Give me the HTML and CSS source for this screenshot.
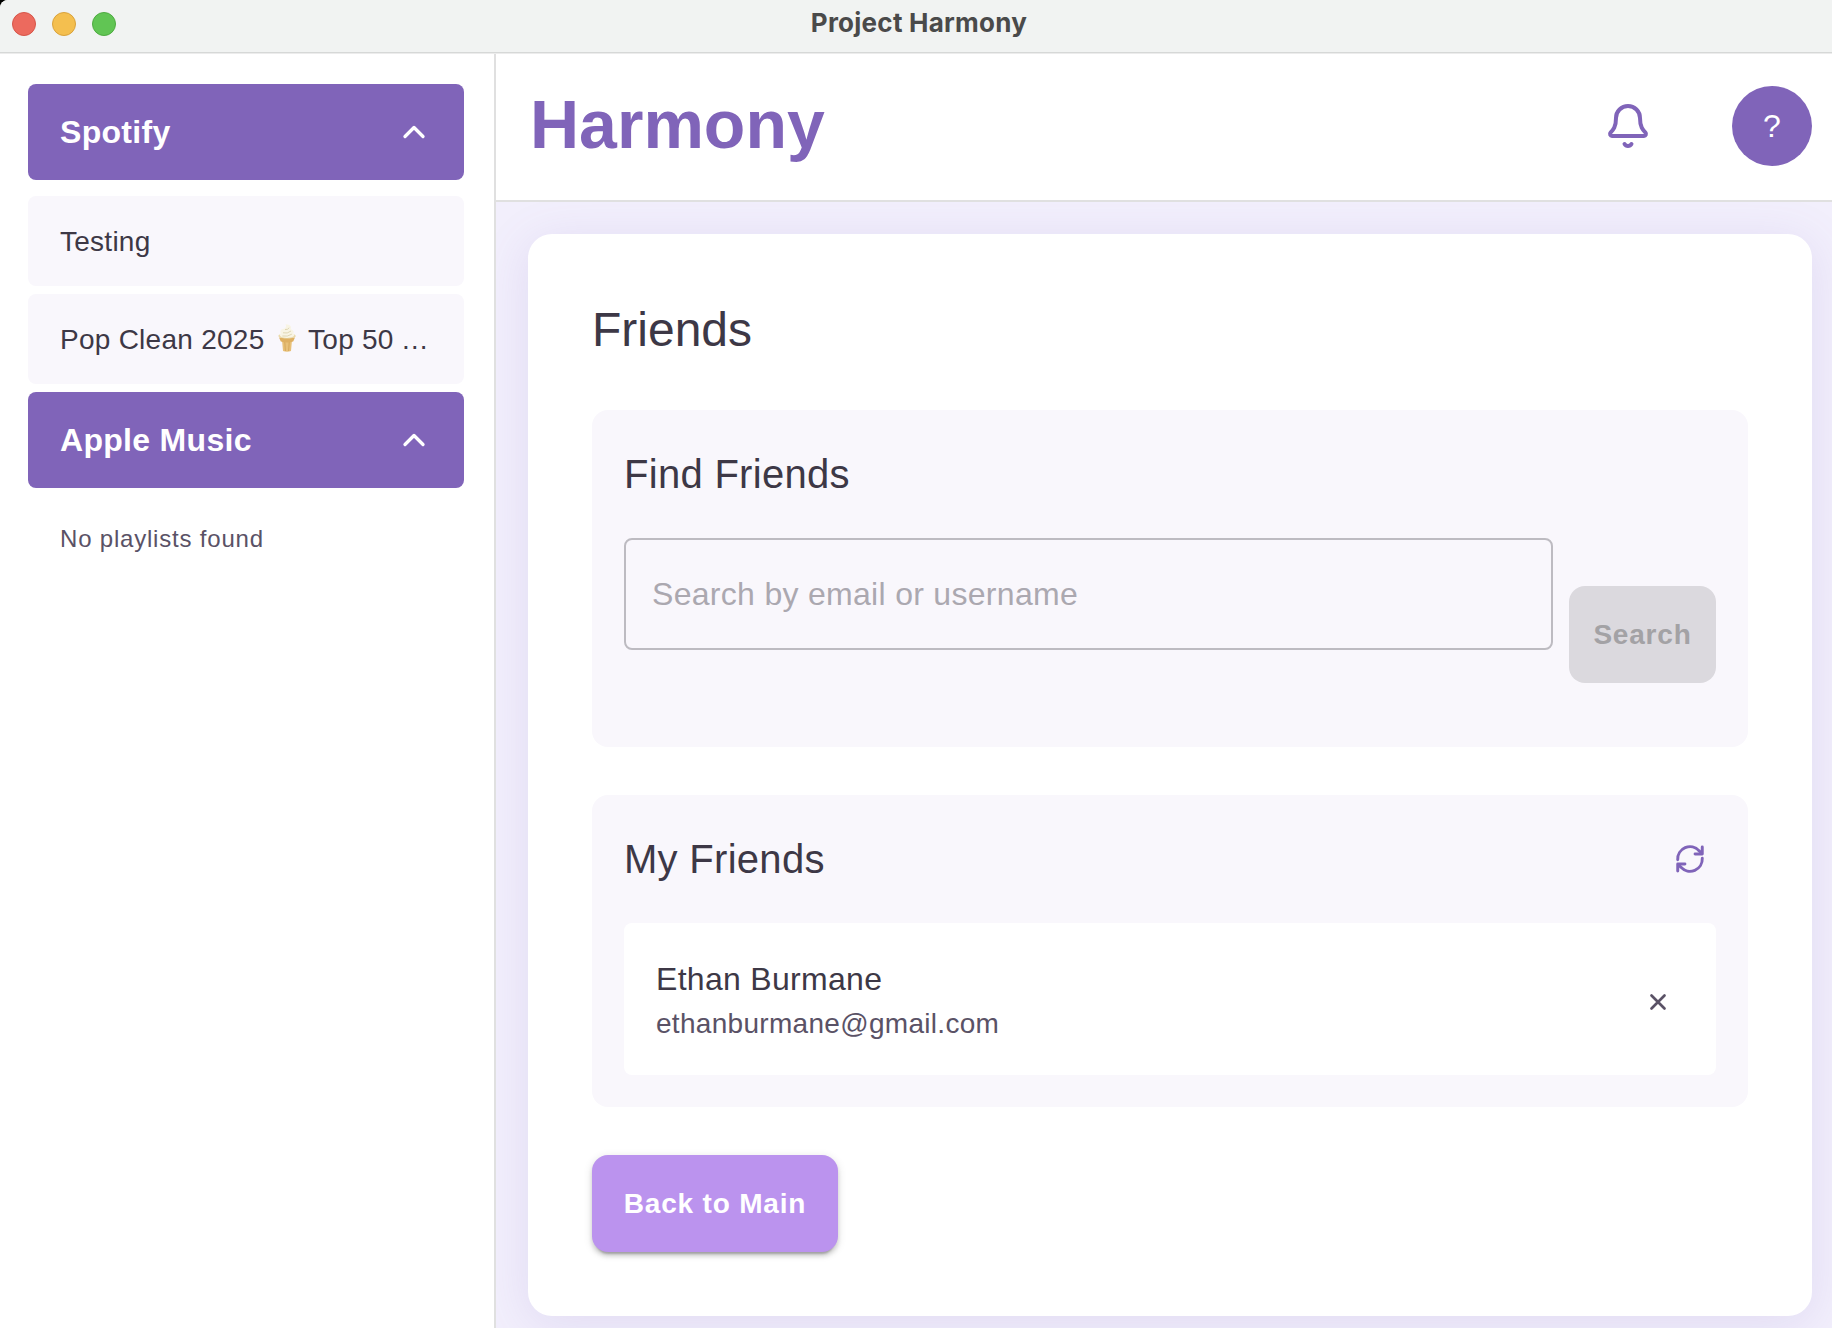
FILE: index.html
```html
<!DOCTYPE html>
<html lang="en">
<head>
<meta charset="utf-8">
<title>Project Harmony</title>
<link rel="stylesheet" href="styles.css">
</head>
<body>
<div class="window">
  <div class="titlebar">
    <div class="lights"><span class="light red"></span><span class="light yellow"></span><span class="light green"></span></div>
    <div class="window-title">Project Harmony</div>
    <div></div>
  </div>
  <div class="app">
    <aside class="sidebar">
      <button class="group">
        <span>Spotify</span>
        <svg width="36" height="36" viewBox="0 0 24 24" class="line chevron"><path d="m18 15-6-6-6 6"/></svg>
      </button>
      <ul class="playlists">
        <li class="playlist">Testing</li>
        <li class="playlist">Pop Clean 2025 <svg class="cone" viewBox="0 0 20 28" width="20" height="28"><path d="M5 16h10l-1 11q-4 1.500-8 0z" fill="#e8c078"/><path d="M7.800 18l.6 9M12.200 18l-.6 9" stroke="#cf9d4e" stroke-width=".7" fill="none"/><path d="M2 13.500h16l-1.800 4q-6.200 1.800-12.400 0z" fill="#dfb062"/><path d="M1.200 12.200q.2-1.400 2-1.900h13.600q2 .5 2 2.100c-3.500 2.800-13.800 3-17.600-.2z" fill="#ead9a8"/><path d="M8.600.2c4.800.1 6.400 3 4.900 5 3 .5 3.700 2.600 2.800 4.200 1.400.8 1.300 2.400-.1 3.200-3.600 2-9.300 1.900-12.400 0-1.400-1-1.300-2.700 0-3.400-1.200-1.900 0-3.700 2-4.200 2.600-.6 4-2.100 2.800-4.800z" fill="#f8f4e4"/><path d="M6 8.800q4.500 1.200 8-1.800M5.300 12q5.200 1 9.500-1.800M8 5.600q3 .2 4.200-1.800" fill="none" stroke="#ddd3ae" stroke-width=".9"/></svg> Top 50 <span class="more">…</span></li>
      </ul>
      <button class="group">
        <span>Apple Music</span>
        <svg width="36" height="36" viewBox="0 0 24 24" class="line chevron"><path d="m18 15-6-6-6 6"/></svg>
      </button>
      <p class="empty">No playlists found</p>
    </aside>
    <div class="main">
      <header class="header">
        <h1 class="brand">Harmony</h1>
        <div class="actions">
          <svg width="48" height="48" viewBox="0 0 24 24" class="line bell"><path d="M10.268 21a2 2 0 0 0 3.464 0"/><path d="M3.262 15.326A1 1 0 0 0 4 17h16a1 1 0 0 0 .74-1.673C19.41 13.956 18 12.499 18 8A6 6 0 0 0 6 8c0 4.499-1.411 5.956-2.738 7.326"/></svg>
          <div class="avatar">?</div>
        </div>
      </header>
      <main class="content">
        <div class="paper">
          <h2 class="page-title">Friends</h2>
          <section class="panel find">
            <h3 class="panel-title">Find Friends</h3>
            <div class="search-row">
              <input class="search-input" type="text" placeholder="Search by email or username">
              <button class="search-button" disabled>Search</button>
            </div>
          </section>
          <section class="panel">
            <div class="panel-head">
              <h3 class="panel-title">My Friends</h3>
              <svg width="32" height="32" viewBox="0 0 24 24" class="line refresh"><path d="M2.800 12.500A9.200 9.200 0 0 1 18.740 5.740L20.500 7.500"/><path d="M21.200 3v5.200h-5.400"/><path d="M21.200 11.500A9.200 9.200 0 0 1 5.260 18.260L3.500 16.500"/><path d="M8.200 15.800H2.800V21"/></svg>
            </div>
            <div class="friend">
              <div>
                <div class="friend-name">Ethan Burmane</div>
                <div class="friend-email">ethanburmane@gmail.com</div>
              </div>
              <svg width="26" height="26" viewBox="0 0 24 24" class="line remove"><path d="M18 6 6 18M6 6l12 12"/></svg>
            </div>
          </section>
          <button class="back">Back to Main</button>
        </div>
      </main>
    </div>
  </div>
</div>
</body>
</html>
```
FILE: styles.css
```css
* { box-sizing: border-box; }
html { background: #000; }
body {
  margin: 0;
  font-family: "Liberation Sans", Arial, sans-serif;
  color: #3d3846;
  overflow: hidden;
}
h1, h2, h3, p, ul { margin: 0; padding: 0; }
h1, h2, h3 { font-weight: 400; }
button, input { font-family: inherit; border: 0; margin: 0; }
svg { flex: none; }
.line { fill: none; stroke: currentColor; stroke-width: 2; stroke-linecap: round; stroke-linejoin: round; }

.window {
  width: 1832px;
  height: 1328px;
  display: flex;
  flex-direction: column;
  background: #fff;
  border-top-left-radius: 8px;
  overflow: hidden;
}
.titlebar {
  height: 54px;
  flex: none;
  display: grid;
  grid-template-columns: 1fr auto 1fr;
  background: #f1f3f2;
  border-bottom: 1px solid #ececec;
  box-shadow: inset 0 -1px #d6d8d7;
}
.lights { display: flex; gap: 16px; padding: 12px; }
.light { width: 24px; height: 24px; border-radius: 50%; border: 1px solid; }
.red { background: #ec6a5e; border-color: #d65549; }
.yellow { background: #f4bf4f; border-color: #d9a23c; }
.green { background: #61c554; border-color: #4eab41; }
.window-title {
  font: 700 26px/46px Inter, sans-serif;
  letter-spacing: 0.25px;
  padding-left: 6px;
  color: #4a4a4a;
}

.app { flex: 1; min-height: 0; display: flex; }
.sidebar {
  width: 496px;
  flex: none;
  padding: 30px 30px 0 28px;
  border-right: 2px solid #e0e0e0;
}
.group {
  width: 100%;
  height: 96px;
  display: flex;
  align-items: center;
  justify-content: space-between;
  padding: 0 32px;
  border-radius: 8px;
  background: #8064b9;
  color: #fff;
  font-size: 32px;
  font-weight: 700;
  letter-spacing: 0.3px;
}
.chevron { stroke-width: 2.2; }
.playlists {
  list-style: none;
  display: flex;
  flex-direction: column;
  gap: 8px;
  padding: 16px 0 8px;
}
.playlist {
  height: 90px;
  padding: 0 32px;
  border-radius: 8px;
  background: #f9f7fc;
  font-size: 28px;
  line-height: 92px;
  letter-spacing: 0.26px;
  white-space: nowrap;
}
.cone { margin: 0 4px; vertical-align: -3px; }
.more { margin-left: -1px; letter-spacing: 0; }
.empty {
  padding: 31px 32px;
  font-size: 24px;
  line-height: 40px;
  letter-spacing: 0.8px;
  color: #5a5266;
}

.main { flex: 1; min-width: 0; display: flex; flex-direction: column; }
.header {
  height: 148px;
  flex: none;
  display: flex;
  align-items: center;
  justify-content: space-between;
  padding: 0 20px 2px 34px;
  border-bottom: 2px solid #e0e0e0;
}
.brand { font-size: 68px; font-weight: 700; line-height: 80px; color: #8064b9; padding-bottom: 4px; }
.actions { display: flex; align-items: center; gap: 80px; color: #8064b9; }
.avatar {
  width: 80px;
  height: 80px;
  border-radius: 50%;
  background: #8064b9;
  color: #fff;
  font-size: 32px;
  line-height: 80px;
  text-align: center;
}
.content { flex: 1; min-height: 0; padding: 32px 20px 12px 32px; background: #f2effc; overflow: hidden; }
.paper {
  height: 1082px;
  padding: 64px;
  border-radius: 24px;
  background: #fff;
  box-shadow: 0 8px 48px rgba(128, 100, 185, 0.15);
}
.page-title { font-size: 48px; line-height: 64px; margin-bottom: 48px; }
.panel { padding: 32px; border-radius: 16px; background: #f9f7fc; margin-bottom: 48px; }
.find { height: 337px; }
.panel-title { font-size: 40px; line-height: 64px; letter-spacing: 0.29px; }
.search-row { display: flex; align-items: flex-start; gap: 16px; margin-top: 32px; }
.search-input {
  flex: 1;
  height: 112px;
  padding: 0 26px;
  border: 2px solid #bdbbc1;
  border-radius: 8px;
  background: transparent;
  font-size: 32px;
  letter-spacing: 0.3px;
}
.search-input::placeholder { color: #aba8b0; opacity: 1; }
.search-button {
  width: 147px;
  height: 97px;
  margin-top: 48px;
  padding: 0;
  border-radius: 16px;
  background: #dbd9de;
  color: #a3a2a5;
  font-size: 28px;
  font-weight: 700;
  letter-spacing: 0.8px;
}
.panel-head { display: flex; align-items: center; justify-content: space-between; padding-right: 10px; }
.refresh { color: #8064b9; stroke-width: 2.2; }
.friend {
  display: flex;
  align-items: center;
  justify-content: space-between;
  height: 152px;
  margin-top: 32px;
  padding: 0 45px 0 32px;
  border-radius: 8px;
  background: #fff;
}
.friend-name { font-size: 32px; line-height: 48px; letter-spacing: 0.3px; }
.friend-email { font-size: 28px; line-height: 42px; margin-bottom: -2px; letter-spacing: 0.3px; color: #5a5266; }
.remove { color: #5a5266; margin-top: 6px; stroke-width: 2.5; }
.back {
  display: block;
  width: 246px;
  height: 97px;
  padding: 0;
  border-radius: 16px;
  background: #bb93ee;
  color: #fff;
  font-size: 28px;
  font-weight: 700;
  letter-spacing: 0.8px;
  box-shadow: 0 6px 2px -4px rgba(0, 0, 0, 0.2), 0 4px 4px rgba(0, 0, 0, 0.14), 0 2px 10px rgba(0, 0, 0, 0.12);
}
```
